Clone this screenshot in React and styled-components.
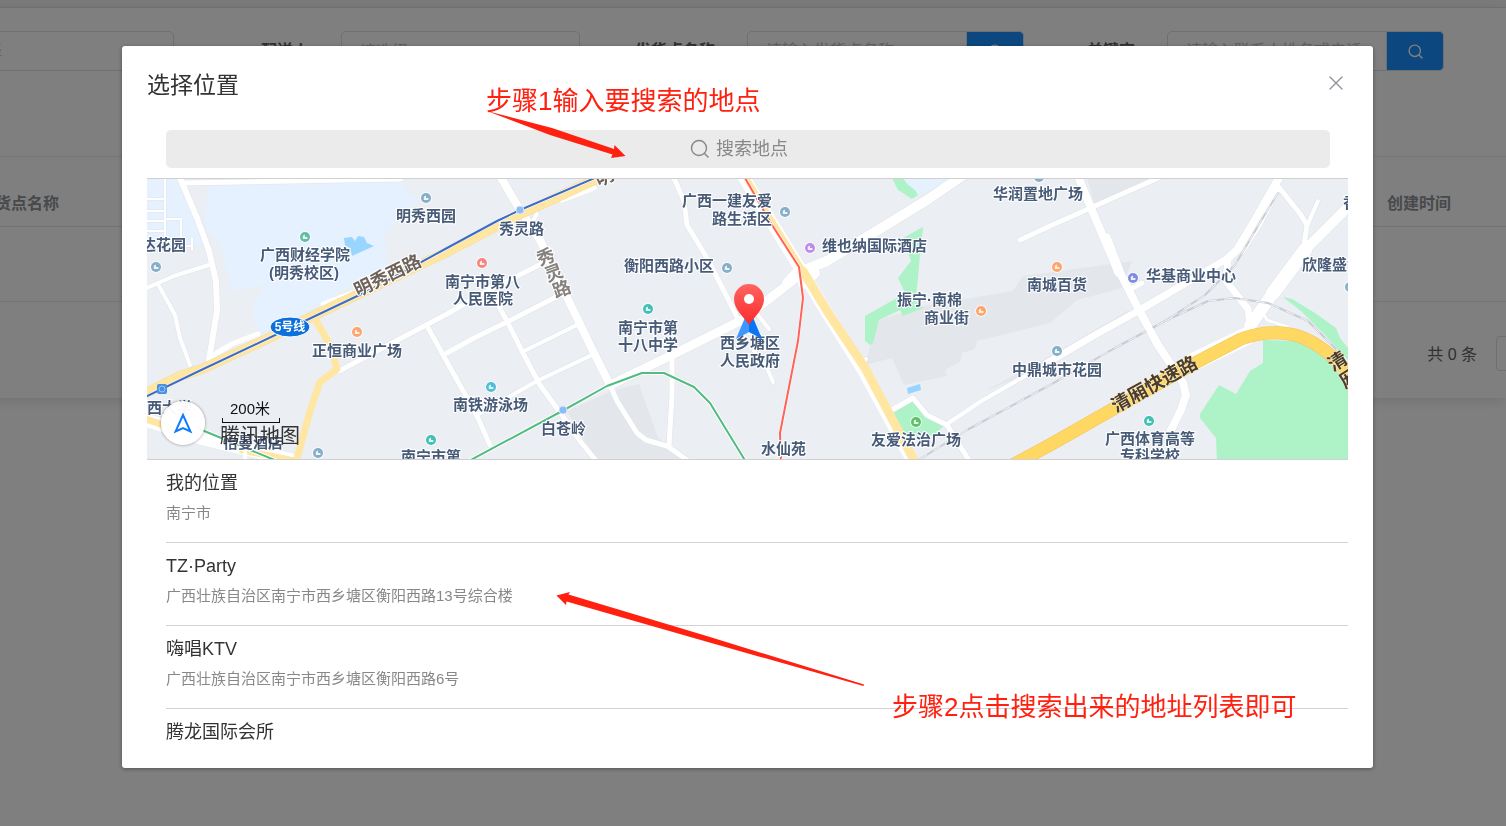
import styled, { createGlobalStyle } from 'styled-components'
import { Search, X } from 'lucide-react'

const places = [
  { name: '我的位置', address: '南宁市' },
  { name: 'TZ·Party', address: '广西壮族自治区南宁市西乡塘区衡阳西路13号综合楼' },
  { name: '嗨唱KTV', address: '广西壮族自治区南宁市西乡塘区衡阳西路6号' },
  { name: '腾龙国际会所', address: '广西壮族自治区南宁市西乡塘区' },
]

const labels = [
  ['达花园', -6, 72],
  ['明秀西园', 249, 43],
  ['广西财经学院', 113, 82],
  ['(明秀校区)', 122, 100],
  ['秀灵路', 352, 56],
  ['南宁市第八', 298, 109],
  ['人民医院', 306, 126],
  ['衡阳西路小区', 477, 93],
  ['广西一建友爱', 535, 28],
  ['路生活区', 565, 46],
  ['南宁市第', 471, 155],
  ['十八中学', 471, 172],
  ['西乡塘区', 573, 170],
  ['人民政府', 573, 188],
  ['正恒商业广场', 165, 178],
  ['南铁游泳场', 306, 232],
  ['白苍岭', 394, 256],
  ['南宁市第', 254, 284],
  ['西大学', 0, 235],
  ['怡曼酒店', 76, 270],
  ['水仙苑', 614, 276],
  ['维也纳国际酒店', 675, 73],
  ['振宁·南棉', 750, 127],
  ['商业街', 777, 145],
  ['友爱法治广场', 724, 267],
  ['华润置地广场', 846, 21],
  ['南城百货', 880, 112],
  ['中鼎城市花园', 865, 197],
  ['华基商业中心', 999, 103],
  ['欣隆盛世', 1155, 92],
  ['香', 1196, 30],
  ['广西体育高等', 958, 266],
  ['专科学校', 973, 283],
]

const points = [
  [158, 59, '#5fbfa3'],
  [279, 20, '#85aec8'],
  [9, 89, '#85aec8'],
  [210, 154, '#ffa46c'],
  [284, 262, '#3fc1b4'],
  [171, 275, '#85aec8'],
  [335, 85, '#f58581'],
  [580, 90, '#85aec8'],
  [501, 131, '#3fc1b4'],
  [344, 209, '#4fbfd6'],
  [638, 34, '#85aec8'],
  [663, 70, '#bd8cec'],
  [834, 133, '#ffa46c'],
  [769, 244, '#5ec168'],
  [910, 89, '#ffa46c'],
  [986, 100, '#808be4'],
  [910, 173, '#85aec8'],
  [1002, 243, '#3fc1b4'],
  [1203, 109, '#85aec8'],
  [892, -1, '#85aec8'],
]

// [path, width]
const streets = [
  ['M0 21H18M0 33H18M0 43H18M0 53H18M18 0V64M18 41H34V63M34 68H45M45 60V72', 2],
  ['M33 0L50 40 62 73 69 103 70 133 62 182', 6],
  ['M36 5L147 3 254 1', 5],
  ['M0 110L27 98 65 86', 4],
  ['M12 108L28 137 33 160 43 187', 4],
  ['M192 193L300 136 333 117 400 83', 5],
  ['M280 148L300 184 330 238 343 267', 5],
  ['M300 175L327 160 358 145 413 117', 5],
  ['M377 173L430 147', 4],
  ['M330 237L390 203 445 177', 4],
  ['M340 107L360 143 377 177 393 207 417 240 433 263 450 284', 5],
  ['M353 -2L373 32 393 62 417 113 443 167 463 207', 8],
  ['M390 36L384 46', 4],
  ['M463 207L470 223 490 255 499 262 520 268 543 284', 5],
  ['M525 177L525 217 522 268', 5],
  ['M463 207L525 177 597 141 613 128 640 107 655 95', 9],
  ['M655 93L680 83 736 49 780 22 815 -2', 10],
  ['M640 105L651 93 M668 95L656 106', 10],
  ['M526 -2L537 23 540 47 560 80 577 113 592 143', 5],
  ['M611 137L622 151M607 173L620 190 626 204', 4],
  ['M713 188L719 181', 4],
  ['M743 233L766 220 780 237 800 247 823 284', 5],
  ['M800 246L836 222 901 185', 4],
  ['M900 185L948 157 991 133 1068 88 1081 80', 7],
  ['M1079 82L1090 72 1108 42 1133 -2', 8],
  ['M1096 74L1114 45 1131 13', 4],
  ['M873 62L903 48 1011 0', 5],
  ['M931 -2L944 30 964 77 991 130 1011 167 1036 205 1039 217 1034 232 1024 252', 8],
  ['M959 60L972 94', 10],
  ['M984 111L995 105', 5],
  ['M1203 27L1158 72', 10],
  ['M1158 72L1126 115', 14],
  ['M1126 115L1103 148', 12],
  ['M1131 8L1154 37 1160 47 1157 67', 5],
  ['M1171 23L1160 48', 4],
  ['M1081 80L1079 103 1101 131 1103 150', 7],
  ['M1114 132L1120 142 1141 149', 3],
]

const railway =
  'M773 281L820 252 903 207 968 170 1018 143 1058 117 1088 87 1114 43 1131 15M1018 143L1061 123 1088 120 1121 125 1161 143 1191 173'

const Poi = ({ x, y, color }) => (
  <g transform={`translate(${x} ${y})`}>
    <circle r='6' fill='#fff' opacity='0.7' />
    <circle r='5' fill={color} />
    <path d='M-2.2 2V-1.2L0 -2.4V0H2.4V2Z' fill='#fff' opacity='0.85' />
  </g>
)

const MapDrawing = () => (
  <MapSvg viewBox='0 0 1201 280' preserveAspectRatio='xMidYMid slice'>
    <g transform='translate(0 -1)'>
      <rect width='1201' height='284' fill='#ebeef3' />
      <g fill='#e5f1ff'>
        <path d='M0 0H33L50 40 60 66 0 68Z' />
        <path d='M62 7L252 3 257 10 272 23 240 53 237 63 242 87 200 110 160 133 113 155 108 147 105 127 117 107 85 113 73 67 57 47Z' />
        <path d='M756 0L771 17 813 0Z' />
      </g>
      <g fill='#e3e6eb'>
        <path d='M420 233L467 212 492 206 511 260 540 284 450 284Z' />
        <path d='M730 143L776 128 866 113 876 98 950 88 985 83 975 110 930 122 903 145 830 163 828 171 815 175 813 184 798 192 800 198 757 207 745 180 718 187Z' />
        <path d='M940 0L948 27 1010 0ZM838 213L903 178 982 132 985 138 903 187Z' />
      </g>
      <g fill='#aef2c8'>
        <path d='M745 0L751 12 765 21 771 17 768 12 760 6 756 0Z' />
        <path d='M776 49L773 77 770 110 768 123 776 130 756 138 753 132 732 142 726 165 723 167 718 163V138L750 120 758 115 751 100 764 83 756 60Z' />
        <path d='M746 235L766 223 780 238 797 248 786 257 758 260Z' />
        <path d='M1116 162L1154 163 1178 177 1201 207V284H1070L1069 260 1053 240V236L1072 207 1089 216 1103 193 1116 185Z' />
        <path d='M1136 119L1145 121 1168 135 1189 150 1193 160 1201 170V182L1178 157 1154 133Z' />
      </g>
      <path d='M197 60L205 59 208 63 211 58 217 59 220 65 227 68 205 78 203 70 198 67Z' fill='#99d6ff' />
      <path d='M760 210L773 206 774 212 761 216Z' fill='#99d3ff' />

      <g fill='none' strokeLinecap='round' strokeLinejoin='round'>
        {streets.map(([d, width]) => (
          <path key={`edge${d}`} d={d} stroke='#dfe3e9' strokeWidth={width + 1} />
        ))}
        {streets.map(([d, width]) => (
          <path key={d} d={d} stroke='#fff' strokeWidth={width} />
        ))}
        <path d={railway} stroke='#c9ccd2' strokeWidth='2' />
        <path d={railway} stroke='#f4f5f8' strokeDasharray='8 8' />
        <path d='M991 133L1068 88M991 130L1011 167' stroke='#fff' strokeWidth='7' />

        <path d='M65 178L85 166 111 156M176 126L208 114M415 22L447 10' stroke='#fff' strokeWidth='5' />
        <path d='M-4 241L57 261 145 282' stroke='#fff' strokeWidth='13' />
        <path d='M-4 240L30 252M95 272L147 283' stroke='#ffe6a3' strokeWidth='7' />
        <path d='M98 274V284' stroke='#fff' strokeWidth='4' />
        <path d='M-5 217L33 198 55 191 120 161 170 136 300 74 367 39 452 0' stroke='#f7dc98' strokeWidth='10' />
        <path d='M-5 217L33 198 55 191 120 161 170 136 300 74 367 39 452 0' stroke='#ffe6a3' strokeWidth='9' />
        <path d='M168 141L183 167 190 191 173 204 163 233 149 284' stroke='#ffe6a3' strokeWidth='7' />
        <path d='M-4 220L50 194 143 150 225 111 300 70 350 43 373 32 450 -1' stroke='#fff' strokeWidth='3' />
        <path d='M-4 220L50 194 143 150 225 111 300 70 350 43 373 32 450 -1' stroke='#3b6cc8' strokeWidth='2' />

        <path d='M596 -2L625 45 656 95 680 135 716 192 766 284' stroke='#fff' strokeWidth='12' />
        <path d='M598 -2L625 43 656 93' stroke='#ffe6a3' strokeWidth='6' />
        <path d='M656 93L680 133 718 190 768 284' stroke='#ffe6a3' strokeWidth='9' />
        <path d='M598 0L625 47 652 89 656 120 651 163 633 255 634 284' stroke='#fff' strokeWidth='3' />
        <path d='M598 0L625 47 652 89 656 120 651 163 633 255 634 284' stroke='#ff6257' strokeWidth='2' />

        <path d='M320 284L417 232 460 208 495 195H517L547 209 563 225 599 284M50 250L130 283' stroke='#fff' strokeWidth='4' />
        <path d='M320 284L417 232 460 208 495 195H517L547 209 563 225 599 284M50 250L130 283' stroke='#52bb80' strokeWidth='2' />

        <path d='M1048 183L1100 158' stroke='#fff' strokeWidth='18' />
        <path d='M858 291L901 268 968 230 1048 185 1094 161Q1122 151 1148 157 1174 164 1204 197' stroke='#f1c555' strokeWidth='13' />
        <path d='M858 291L901 268 968 230 1048 185 1094 161Q1122 151 1148 157 1174 164 1204 197' stroke='#ffd763' strokeWidth='12' />
      </g>

      {points.map(([x, y, color]) => (
        <Poi key={`${x}-${y}`} x={x} y={y} color={color} />
      ))}
      <g fill='#8dbcf5' stroke='#d3e5fb'>
        <circle cx='373' cy='32' r='4' />
        <circle cx='416' cy='232' r='4' />
      </g>
      <rect x='10' y='206' width='10' height='10' rx='2' fill='#4a90e0' />
      <circle cx='15' cy='211' r='3' fill='none' stroke='#9cc5f5' />

      <PlaceLabels>
        {labels.map(([text, x, y]) => (
          <text key={`${text}${x}`} x={x} y={y}>{text}</text>
        ))}
      </PlaceLabels>
      <RoadLabels>
        <text transform='translate(211 119) rotate(-26)' fill='#6e625a'>明秀西路</text>
        <text transform='translate(452 9) rotate(-26)' fill='#6e625a'>明</text>
        <g fill='#85817e' textAnchor='middle'>
          <text transform='translate(401 85) rotate(-20)'>秀</text>
          <text transform='translate(409 101) rotate(-20)'>灵</text>
          <text transform='translate(417 117) rotate(-20)'>路</text>
        </g>
        <ExpressLabel transform='translate(969 235) rotate(-29)'>清厢快速路</ExpressLabel>
        <g textAnchor='middle'>
          <ExpressLabel transform='translate(1194 189) rotate(-32)'>清</ExpressLabel>
          <ExpressLabel transform='translate(1206 206) rotate(-32)'>厢</ExpressLabel>
        </g>
      </RoadLabels>

      <ellipse cx='143' cy='149' rx='20' ry='10' fill='#0c6fdb' stroke='#fff' />
      <LineName x='143' y='153'>5号线</LineName>

      <path d='M602 130L589 161 602 154Z' fill='#3d97ff' />
      <path d='M602 130L615 161 602 154Z' fill='#0a74f5' />
      <path d='M602 147C598 140 587 132 587 121A15 15 0 0 1 617 121C617 132 606 140 602 147Z' fill='url(#pin)' />
      <circle cx='602' cy='121' r='5' fill='#fff' />
      <defs>
        <linearGradient id='pin' x2='0' y2='1'>
          <stop offset='0' stopColor='#ff6461' />
          <stop offset='1' stopColor='#fb2a2a' />
        </linearGradient>
      </defs>
    </g>
  </MapSvg>
)

const Background = () => (
  <Page>
    <TopBar />
    <Card>
      <Filters>
        <Select aria-label='状态'>
          <option>请选择</option>
        </Select>
        <Field>
          <FieldLabel htmlFor='courier' $width={167}>配送人</FieldLabel>
          <Select id='courier'>
            <option>请选择</option>
          </Select>
        </Field>
        <Field>
          <FieldLabel htmlFor='origin' $width={167}>发货点名称</FieldLabel>
          <TextInput id='origin' placeholder='请输入发货点名称' />
          <SearchButton aria-label='搜索发货点'>
            <Search size={17} strokeWidth={2} />
          </SearchButton>
        </Field>
        <Field>
          <FieldLabel htmlFor='keyword' $width={143}>关键字</FieldLabel>
          <TextInput id='keyword' placeholder='请输入联系人姓名或电话' />
          <SearchButton aria-label='搜索关键字'>
            <Search size={17} strokeWidth={2} />
          </SearchButton>
        </Field>
      </Filters>
      <Table>
        <thead>
          <tr>
            <th>发货点名称</th>
            <th>创建时间</th>
          </tr>
        </thead>
        <tbody>
          <tr>
            <td />
            <td />
          </tr>
        </tbody>
      </Table>
      <Pagination>
        <span>共 0 条</span>
        <PageSize aria-label='每页条数'>
          <option>10条/页</option>
        </PageSize>
      </Pagination>
    </Card>
  </Page>
)

const App = () => {
  return (
    <>
      <GlobalStyle />
      <Background />
      <Overlay>
        <Dialog role='dialog' aria-labelledby='dialog-title'>
          <DialogHeader>
            <h2 id='dialog-title'>选择位置</h2>
            <CloseButton aria-label='关闭'>
              <X size={24} strokeWidth={1.2} />
            </CloseButton>
          </DialogHeader>
          <SearchBar>
            <svg width='20' height='20' viewBox='0 0 20 20' fill='none' stroke='currentColor' strokeWidth='1.4'>
              <circle cx='9' cy='9' r='7.5' />
              <path d='M14.5 14.5L18.5 18.5' />
            </svg>
            <input type='text' aria-label='搜索地点' placeholder='搜索地点' />
          </SearchBar>
          <MapBox>
            <MapDrawing />
            <LocateButton aria-label='定位'>
              <svg width='20' height='22' viewBox='0 0 20 22' fill='none' stroke='#0f7bff' strokeWidth='2'>
                <path d='M10 3L17.4 19.4 10 16 2.6 19.4Z' />
              </svg>
            </LocateButton>
            <MapScale>
              <span>200米</span>
              <i />
              <strong>腾讯地图</strong>
            </MapScale>
          </MapBox>
          <PlaceList>
            {places.map(({ name, address }) => (
              <li key={name}>
                <PlaceButton>
                  <PlaceName>{name}</PlaceName>
                  <PlaceAddress>{address}</PlaceAddress>
                </PlaceButton>
              </li>
            ))}
          </PlaceList>

          <Note $left={364} $top={36}>步骤1输入要搜索的地点</Note>
          <Arrow $left={364} $top={64} width='142' height='52' viewBox='486 110 142 52'>
            <path d='M487 111L552 128 614 149 614.500 145 625.500 156 611 158 612.500 154.500 550 135Z' />
          </Arrow>
          <Note $left={770} $top={642}>步骤2点击搜索出来的地址列表即可</Note>
          <Arrow $left={434} $top={544} width='310' height='98' viewBox='556 590 310 98'>
            <path d='M556.500 595.500L570 592 568.500 594.500 710 637 864 684.500 863.500 686 706 641.500 566.500 601.500 566 605Z' />
          </Arrow>
        </Dialog>
      </Overlay>
    </>
  )
}

const GlobalStyle = createGlobalStyle`
  * {
    box-sizing: border-box;
  }
  body {
    margin: 0;
    overflow: hidden;
    color: #333;
    font-family: 'Liberation Sans', 'Noto Sans CJK SC', sans-serif;
  }
  button, input, select {
    font-family: inherit;
  }
`

const Page = styled.div`
  min-height: 100vh;
  overflow: hidden;
  background: #fff;
`

const TopBar = styled.div`
  height: 8px;
  background: #f6f6f6;
  border-bottom: 1px solid #e8e8e8;
`

const Card = styled.section`
  margin-left: -65px;
  background: #fff;
  box-shadow: 0 2px 12px rgba(0, 0, 0, 0.12);
`

const Filters = styled.form`
  display: flex;
  padding: 23px 0 85px;
`

const Field = styled.div`
  display: flex;
`

const FieldLabel = styled.label`
  width: ${(props) => props.$width}px;
  padding-right: 32px;
  text-align: right;
  font-size: 16px;
  font-weight: 700;
  line-height: 40px;
  color: #606266;
`

const TextInput = styled.input`
  width: 220px;
  height: 40px;
  padding: 0 18px;
  border: 1px solid #dcdfe6;
  border-radius: 5px 0 0 5px;
  background: #fff;
  font-size: 16px;
  &::placeholder {
    color: #c0c4cc;
  }
`

const Select = styled.select`
  width: 239px;
  height: 40px;
  padding: 0 18px;
  border: 1px solid #dcdfe6;
  border-radius: 5px;
  background: #fff;
  color: #c0c4cc;
  font-size: 16px;
  appearance: none;
`

const SearchButton = styled.button`
  display: grid;
  place-items: center;
  width: 57px;
  height: 40px;
  padding: 0;
  border: 1px solid #dcdfe6;
  border-left: 0;
  border-radius: 0 5px 5px 0;
  background: #188fff;
  color: #fff;
`

const Table = styled.table`
  width: 100%;
  table-layout: fixed;
  border-collapse: collapse;
  border-top: 1px solid #e8eaee;
  th {
    height: 70px;
    padding: 33px 0 0 44px;
    text-align: left;
    vertical-align: top;
    color: #909399;
    font-size: 16px;
    border-bottom: 1px solid #e2e6f0;
  }
  th:last-child {
    width: 119px;
    padding-left: 0;
  }
  td {
    height: 75px;
    padding: 0;
    border-bottom: 1px solid #e8eaee;
  }
`

const Pagination = styled.div`
  display: flex;
  justify-content: flex-end;
  align-items: center;
  gap: 19px;
  height: 96px;
  padding-top: 6px;
  margin-right: -110px;
  color: #606266;
  font-size: 16px;
`

const PageSize = styled.select`
  width: 120px;
  height: 35px;
  padding-left: 18px;
  border: 1px solid #dcdfe6;
  border-radius: 4px;
  background: #fff;
`

const Overlay = styled.div`
  position: fixed;
  inset: 0;
  display: flex;
  align-items: flex-start;
  padding: 46px 133px 0 122px;
  background: rgba(0, 0, 0, 0.5);
`

const Dialog = styled.div`
  position: relative;
  flex: 1;
  min-width: 0;
  padding: 0 25px 25px;
  border-radius: 3px;
  background: #fff;
  box-shadow: 0 1px 4px rgba(0, 0, 0, 0.35);
`

const DialogHeader = styled.header`
  display: flex;
  justify-content: space-between;
  align-items: center;
  height: 84px;
  padding-bottom: 10px;
  h2 {
    margin: 0;
    font-size: 23px;
    font-weight: 400;
  }
`

const CloseButton = styled.button`
  display: grid;
  padding: 0;
  border: 0;
  background: none;
  color: #8b8f96;
`

const SearchBar = styled.label`
  display: flex;
  justify-content: center;
  align-items: center;
  gap: 6px;
  height: 38px;
  margin: 0 18px 10px 19px;
  border-radius: 5px;
  background: #ebebeb;
  color: #888;
  input {
    width: 90px;
    padding: 0;
    border: 0;
    background: none;
    font-size: 18px;
  }
  input::placeholder {
    color: #888;
  }
`

const MapBox = styled.div`
  position: relative;
  overflow: hidden;
  border: solid #d0d0d0;
  border-width: 1px 0;
`

const MapSvg = styled.svg`
  display: block;
  width: 100%;
  height: 280px;
`

const PlaceLabels = styled.g`
  fill: #475b78;
  stroke: #fff;
  stroke-width: 2px;
  paint-order: stroke;
  font-size: 15px;
  font-weight: 700;
`

const RoadLabels = styled.g`
  stroke: #fff;
  stroke-width: 2px;
  paint-order: stroke;
  font-family: 'Noto Sans CJK SC', sans-serif;
  font-size: 18px;
  font-weight: 700;
`

const ExpressLabel = styled.text`
  fill: #4a3c30;
  stroke: #fff3c4;
  stroke-width: 1px;
  font-size: 19px;
`

const LineName = styled.text`
  fill: #fff;
  font-size: 12px;
  font-weight: 700;
  text-anchor: middle;
`

const LocateButton = styled.button`
  position: absolute;
  left: 14px;
  bottom: 14px;
  display: grid;
  place-items: center;
  width: 44px;
  height: 44px;
  padding: 0;
  border: 0;
  border-radius: 50%;
  background: rgba(255, 255, 255, 0.96);
  box-shadow: 0 0 3px rgba(0, 0, 0, 0.45);
`

const MapScale = styled.div`
  position: absolute;
  left: 73px;
  bottom: 9px;
  display: flex;
  flex-direction: column;
  align-items: flex-start;
  color: #111;
  font-size: 15px;
  line-height: 18px;
  span {
    padding-left: 10px;
  }
  i {
    width: 58px;
    height: 5px;
    margin-left: 2px;
    border: 1px solid #111;
    border-top: 0;
  }
  strong {
    font-size: 20px;
    font-weight: 400;
    line-height: 27px;
    color: #333;
  }
`

const PlaceList = styled.ul`
  height: 283px;
  margin: 0 0 0 19px;
  padding: 0;
  overflow: hidden;
  list-style: none;
`

const PlaceButton = styled.button`
  display: flex;
  flex-direction: column;
  gap: 6px;
  width: 100%;
  height: 83px;
  padding: 10px 0 0;
  border: 0;
  border-bottom: 1px solid #d3d3d3;
  background: none;
  text-align: left;
`

const PlaceName = styled.span`
  color: #333;
  font-size: 18px;
  line-height: 26px;
`

const PlaceAddress = styled.span`
  color: #888;
  font-size: 15px;
  line-height: 22px;
`

const Note = styled.p`
  position: absolute;
  left: ${(props) => props.$left}px;
  top: ${(props) => props.$top}px;
  margin: 0;
  color: #ff2010;
  font-size: 26px;
  line-height: 38px;
  white-space: nowrap;
  pointer-events: none;
`

const Arrow = styled.svg`
  position: absolute;
  left: ${(props) => props.$left}px;
  top: ${(props) => props.$top}px;
  fill: #ff2010;
  pointer-events: none;
`

export default App
